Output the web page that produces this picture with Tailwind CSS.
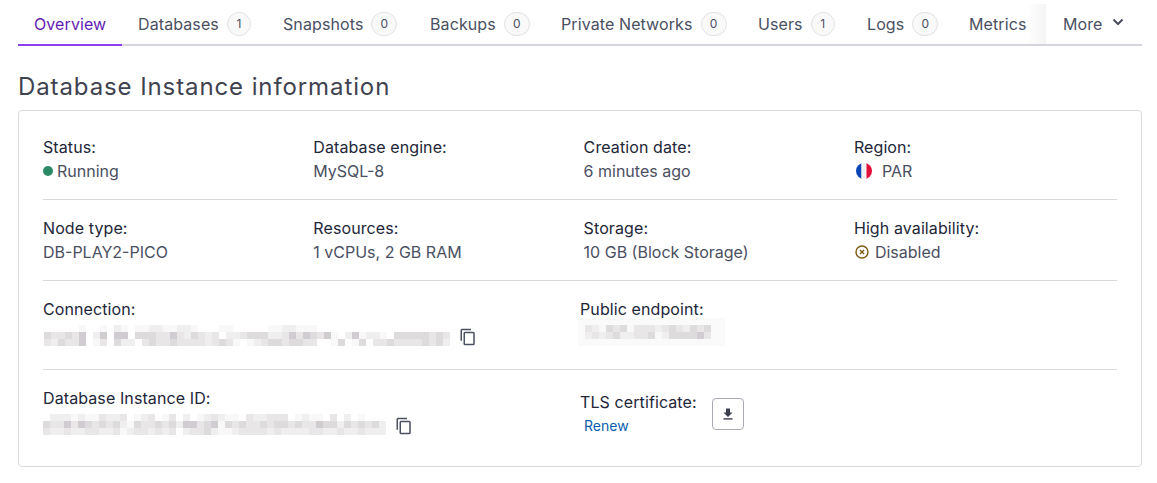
<!DOCTYPE html>
<html lang="en">
<head>
    <meta charset="UTF-8">
    <meta name="viewport" content="width=device-width, initial-scale=1.0">
    <title>Database Instance information</title>
    <script src="https://cdn.jsdelivr.net/npm/@tailwindcss/browser@4"></script>
</head>
<body class="bg-white font-[Inter,sans-serif] text-base text-[#4a4f62] overflow-hidden">
<div class="px-[18px] w-[1160px]">

    <!-- Tabs -->
    <nav class="flex h-[46px] w-[1124px] border-b-2 border-[#d4d5dd] tracking-[0.1px]">
        <a class="flex items-center h-[46px] w-[104px] pl-4 pt-1 border-b-2 border-[#8c40ef] text-[#641cb3]">Overview</a>
        <a class="flex items-center h-[44px] w-[145px] pl-4 pt-1">Databases<span class="ml-2 flex items-center justify-center w-6 h-6 rounded-full border border-[#e1e1e6] bg-[#f9f9fa] text-xs">1</span></a>
        <a class="flex items-center h-[44px] w-[147px] pl-4 pt-1">Snapshots<span class="ml-2 flex items-center justify-center w-[26px] h-6 rounded-full border border-[#e1e1e6] bg-[#f9f9fa] text-xs">0</span></a>
        <a class="flex items-center h-[44px] w-[131px] pl-4 pt-1">Backups<span class="ml-2 flex items-center justify-center w-[26px] h-6 rounded-full border border-[#e1e1e6] bg-[#f9f9fa] text-xs">0</span></a>
        <a class="flex items-center h-[44px] w-[197px] pl-4 pt-1">Private Networks<span class="ml-2 flex items-center justify-center w-[26px] h-6 rounded-full border border-[#e1e1e6] bg-[#f9f9fa] text-xs">0</span></a>
        <a class="flex items-center h-[44px] w-[109px] pl-4 pt-1">Users<span class="ml-2 flex items-center justify-center w-6 h-6 rounded-full border border-[#e1e1e6] bg-[#f9f9fa] text-xs">1</span></a>
        <a class="flex items-center h-[44px] w-[102px] pl-4 pt-1">Logs<span class="ml-2 flex items-center justify-center w-[26px] h-6 rounded-full border border-[#e1e1e6] bg-[#f9f9fa] text-xs">0</span></a>
        <a class="flex items-center h-10 mt-1 w-[93px] pl-4 bg-linear-to-r from-white from-80% to-[#f4f4f5]">Metrics</a>
        <a class="flex items-center h-[44px] w-[96px] pl-[17px] pt-1">More
            <svg class="ml-[7px] -mt-[5px]" width="16" height="16" viewBox="0 0 16 16" fill="none" stroke="#4a4f62" stroke-width="2"><path d="M3.5 5.5 8 10l4.5-4.5"/></svg>
        </a>
    </nav>

    <h2 class="mt-[25px] h-8 text-2xl leading-8 tracking-[0.9px] text-[#3f4250]">Database Instance information</h2>

    <!-- Card -->
    <section class="mt-[7px] w-[1124px] h-[357px] border border-[#d9dae0] rounded p-6">
        <div class="grid grid-cols-[repeat(4,270.3px)] pb-4 border-b border-[#d9d9d9]">
            <div>
                <div class="text-[#222638] leading-6 tracking-[0.1px]">Status:</div>
                <div class="flex items-center leading-6"><span class="w-2.5 h-2.5 rounded-full bg-[#2a8a63] mr-1"></span>Running</div>
            </div>
            <div>
                <div class="text-[#222638] leading-6 tracking-[0.1px]">Database engine:</div>
                <div class="leading-6">MySQL-8</div>
            </div>
            <div>
                <div class="text-[#222638] leading-6 tracking-[0.1px]">Creation date:</div>
                <div class="leading-6">6 minutes ago</div>
            </div>
            <div>
                <div class="text-[#222638] leading-6 tracking-[0.1px]">Region:</div>
                <div class="flex items-center leading-6">
                    <svg class="ml-0.5 mr-2.5" width="16" height="16" viewBox="0 0 16 16"><defs><clipPath id="fr"><circle cx="8" cy="8" r="8"/></clipPath></defs><g clip-path="url(#fr)"><rect width="5.5" height="16" fill="#0a46b8"/><rect x="5.5" width="5" height="16" fill="#f2f2f4"/><rect x="10.5" width="5.5" height="16" fill="#e0103a"/></g></svg>PAR
                </div>
            </div>
        </div>

        <div class="grid grid-cols-[repeat(4,270.3px)] pt-4 pb-4 border-b border-[#d9d9d9]">
            <div>
                <div class="text-[#222638] leading-6 tracking-[0.1px]">Node type:</div>
                <div class="leading-6">DB-PLAY2-PICO</div>
            </div>
            <div>
                <div class="text-[#222638] leading-6 tracking-[0.1px]">Resources:</div>
                <div class="leading-6">1 vCPUs, 2 GB RAM</div>
            </div>
            <div>
                <div class="text-[#222638] leading-6 tracking-[0.1px]">Storage:</div>
                <div class="leading-6">10 GB (Block Storage)</div>
            </div>
            <div>
                <div class="text-[#222638] leading-6 tracking-[0.1px]">High availability:</div>
                <div class="flex items-center leading-6">
                    <svg class="ml-px mr-1.5" width="14" height="14" viewBox="0 0 14 14" fill="none" stroke="#7d5a14" stroke-width="1.4"><circle cx="7" cy="7" r="6"/><path d="M5 5l4 4M9 5l-4 4"/></svg>Disabled
                </div>
            </div>
        </div>

        <div class="grid grid-cols-2 pt-4 pb-4 border-b border-[#d9d9d9]">
            <div>
                <div class="text-[#222638] leading-6 tracking-[0.1px]">Connection:</div>
                <div class="flex items-center h-8">
                    <div class="ml-px mb-[3px]" data-blur="connection"></div>
                    <svg class="ml-[9px]" width="18" height="18" viewBox="0 0 24 24" fill="#4a4f62"><path fill-rule="evenodd" d="M16 1H4a2 2 0 0 0-2 2v14h2V3h12V1zm3 4H8a2 2 0 0 0-2 2v14a2 2 0 0 0 2 2h11a2 2 0 0 0 2-2V7a2 2 0 0 0-2-2zm0 16H8V7h11v14z"/></svg>
                </div>
            </div>
            <div>
                <div class="text-[#222638] leading-6 tracking-[0.1px]">Public endpoint:</div>
                <div class="-mt-[3px] -ml-[2px] w-[147px] h-7 bg-[#fafafa] pl-[7px] pt-[7px]">
                    <div data-blur="endpoint"></div>
                </div>
            </div>
        </div>

        <div class="grid grid-cols-2 pt-4">
            <div>
                <div class="text-[#222638] leading-6 tracking-[0.1px]">Database Instance ID:</div>
                <div class="flex items-center h-8">
                    <div class="mb-[3px]" data-blur="instance"></div>
                    <svg class="ml-[9px]" width="18" height="18" viewBox="0 0 24 24" fill="#4a4f62"><path fill-rule="evenodd" d="M16 1H4a2 2 0 0 0-2 2v14h2V3h12V1zm3 4H8a2 2 0 0 0-2 2v14a2 2 0 0 0 2 2h11a2 2 0 0 0 2-2V7a2 2 0 0 0-2-2zm0 16H8V7h11v14z"/></svg>
                </div>
            </div>
            <div class="flex items-center gap-[15px] h-[56px]">
                <div>
                    <div class="text-[#222638] leading-6 tracking-[0.1px]">TLS certificate:</div>
                    <a class="block pl-1 text-sm leading-6 text-[#0a5fb0]">Renew</a>
                </div>
                <button class="flex items-center justify-center w-8 h-8 rounded border border-[#a9acb8] bg-white">
                    <svg width="14" height="14" viewBox="0 0 14 14" fill="#3a3d50"><path d="M5 1.5h4v4h2.5L7 10 2.5 5.5H5z"/><rect x="2.5" y="11.2" width="9" height="1.4"/></svg>
                </button>
            </div>
        </div>
    </section>
</div>

<script>
    // Censored values of the screenshot, 7px mosaic. Each letter is a shade.
    const shades = { '.': 'transparent', a: '#f8f8f9', b: '#f0efef', c: '#e8e6e7', d: '#dedbdd', e: '#d0ccd1' };
    const mosaics = {
        connection: [
            '.....a..a.ba.aabbaabba...aa.....aabbaaa...................',
            'dccdce.be.ee.dddccecbdcbc.bbcdddbbcecedcea.beabba.dddddcdc',
            'cbdcce.ac.dbb.cdccdccccbcdca.abcddcddcc..ad.ad.ccdccccdcdb'
        ],
        instance: [
            '.bbbabaacbbc.abc.ac.b.abcbaa.cbbccc.abaa.c.b.a...',
            'dccecedcdcdbadccdcdbeecdeadcdccdcddcdcceddbdcdcdb',
            'cbbcbbccbbcabccbcbc.bccdbaabccccbcbbbbccbbcbbcbbb'
        ],
        endpoint: [
            'cbadcdacccbcdcbdcd',
            'bcbcdbbccdabddddec'
        ]
    };
    document.querySelectorAll('[data-blur]').forEach((el) => {
        mosaics[el.dataset.blur].forEach((row) => {
            const line = document.createElement('div');
            line.className = 'flex h-[7px]';
            [...row].forEach((s) => {
                const px = document.createElement('span');
                px.className = 'block w-[7px] h-[7px]';
                px.style.background = shades[s];
                line.appendChild(px);
            });
            el.appendChild(line);
        });
    });
</script>
</body>
</html>
